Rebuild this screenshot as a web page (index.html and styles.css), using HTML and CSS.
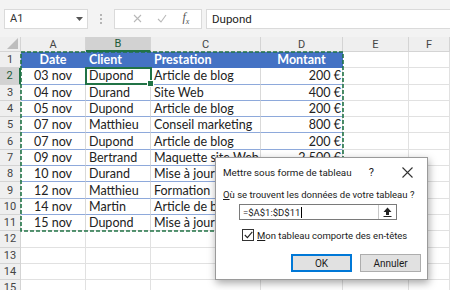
FILE: index.html
```html
<!DOCTYPE html>
<html lang="fr">

<head>
    <meta charset="UTF-8">
    <title>Mettre sous forme de tableau</title>
    <link rel="stylesheet" href="styles.css">
</head>

<body>
    <div class="topbar">
        <div class="namebox">
            <span>A1</span>
            <svg width="7" height="4" viewBox="0 0 7 4"><path d="M0 0h7L3.5 4z" fill="#555"/></svg>
        </div>
        <div class="dots"><i></i><i></i><i></i></div>
        <div class="fxbtns">
            <svg width="9" height="9" viewBox="0 0 9 9"><path d="M1 1l7 7M8 1L1 8" stroke="#b8b8b8" stroke-width="1.1"/></svg>
            <svg width="10" height="9" viewBox="0 0 10 9"><path d="M1 5l3 3 5-7" stroke="#b8b8b8" stroke-width="1.1" fill="none"/></svg>
            <span class="fx">f<sub>x</sub></span>
        </div>
        <div class="formula">Dupond</div>
    </div>

    <div class="sheet">
        <div class="corner"><svg width="11" height="11" viewBox="0 0 11 11"><path d="M11 0v11H0z" fill="#bdbdbd"/></svg></div>
        <div class="ch">A</div>
        <div class="ch sel">B</div>
        <div class="ch">C</div>
        <div class="ch">D</div>
        <div class="ch">E</div>
        <div class="ch">F</div>

        <div class="rh">1</div>
        <div class="c th ctr">Date</div>
        <div class="c th">Client</div>
        <div class="c th">Prestation</div>
        <div class="c th ctr">Montant</div>
        <div class="c"></div>
        <div class="c"></div>

        <div class="rh sel">2</div>
        <div class="c td ctr">03 nov</div>
        <div class="c td">Dupond</div>
        <div class="c td">Article de blog</div>
        <div class="c td r">200 €</div>
        <div class="c"></div>
        <div class="c"></div>

        <div class="rh">3</div>
        <div class="c td ctr">04 nov</div>
        <div class="c td">Durand</div>
        <div class="c td">Site Web</div>
        <div class="c td r">400 €</div>
        <div class="c"></div>
        <div class="c"></div>

        <div class="rh">4</div>
        <div class="c td ctr">05 nov</div>
        <div class="c td">Dupond</div>
        <div class="c td">Article de blog</div>
        <div class="c td r">200 €</div>
        <div class="c"></div>
        <div class="c"></div>

        <div class="rh">5</div>
        <div class="c td ctr">07 nov</div>
        <div class="c td">Matthieu</div>
        <div class="c td">Conseil marketing</div>
        <div class="c td r">800 €</div>
        <div class="c"></div>
        <div class="c"></div>

        <div class="rh">6</div>
        <div class="c td ctr">07 nov</div>
        <div class="c td">Dupond</div>
        <div class="c td">Article de blog</div>
        <div class="c td r">200 €</div>
        <div class="c"></div>
        <div class="c"></div>

        <div class="rh">7</div>
        <div class="c td ctr">09 nov</div>
        <div class="c td">Bertrand</div>
        <div class="c td">Maquette site Web</div>
        <div class="c td r">2 500 €</div>
        <div class="c"></div>
        <div class="c"></div>

        <div class="rh">8</div>
        <div class="c td ctr">10 nov</div>
        <div class="c td">Durand</div>
        <div class="c td">Mise à jour site</div>
        <div class="c td r">150 €</div>
        <div class="c"></div>
        <div class="c"></div>

        <div class="rh">9</div>
        <div class="c td ctr">12 nov</div>
        <div class="c td">Matthieu</div>
        <div class="c td">Formation</div>
        <div class="c td r">600 €</div>
        <div class="c"></div>
        <div class="c"></div>

        <div class="rh">10</div>
        <div class="c td ctr">14 nov</div>
        <div class="c td">Martin</div>
        <div class="c td">Article de blog</div>
        <div class="c td r">200 €</div>
        <div class="c"></div>
        <div class="c"></div>

        <div class="rh">11</div>
        <div class="c td last ctr">15 nov</div>
        <div class="c td last">Dupond</div>
        <div class="c td last">Mise à jour blog</div>
        <div class="c td last r">150 €</div>
        <div class="c"></div>
        <div class="c"></div>

        <div class="rh">12</div>
        <div class="c"></div><div class="c"></div><div class="c"></div><div class="c"></div><div class="c"></div><div class="c"></div>
        <div class="rh">13</div>
        <div class="c"></div><div class="c"></div><div class="c"></div><div class="c"></div><div class="c"></div><div class="c"></div>
        <div class="rh">14</div>
        <div class="c"></div><div class="c"></div><div class="c"></div><div class="c"></div><div class="c"></div><div class="c"></div>
        <div class="rh">15</div>
        <div class="c"></div><div class="c"></div><div class="c"></div><div class="c"></div><div class="c"></div><div class="c"></div>

        <!-- overlays -->
        <svg class="ants" width="324" height="181" viewBox="0 0 324 181">
            <rect x="1" y="1" width="322" height="179" fill="none" stroke="#217346" stroke-width="1.6" stroke-dasharray="4 2"/>
        </svg>
        <div class="cursor"><span class="handle"></span></div>
    </div>

    <div class="dialog">
        <div class="dlg-title">
            <span class="ttl">Mettre sous forme de tableau</span>
            <span class="help">?</span>
            <svg class="close" width="11" height="11" viewBox="0 0 11 11"><path d="M0.5 0.5l10 10M10.5 0.5l-10 10" stroke="#333" stroke-width="1.1"/></svg>
        </div>
        <div class="dlg-label"><u>O</u>ù se trouvent les données de votre tableau ?</div>
        <div class="dlg-input">
            <span class="ref">=$A$1:$D$11<i class="caret"></i></span>
            <span class="pick"><svg width="9" height="10" viewBox="0 0 9 10"><path d="M4.5 0.5L8.5 5H6v3H3V5H0.5z" fill="#222"/><path d="M0.5 9.5h8" stroke="#222"/></svg></span>
        </div>
        <div class="dlg-check">
            <span class="box"><svg width="9" height="8" viewBox="0 0 9 8"><path d="M0.8 4l2.6 2.6L8.3 0.8" stroke="#222" stroke-width="1.1" fill="none"/></svg></span>
            <span><u>M</u>on tableau comporte des en-têtes</span>
        </div>
        <div class="dlg-btns">
            <button class="btn ok">OK</button>
            <button class="btn">Annuler</button>
        </div>
    </div>
</body>

</html>
```

FILE: styles.css
```css
body {
    margin: 0;
    width: 450px;
    height: 290px;
    overflow: hidden;
    font-family: "Lato", "Open Sans", sans-serif;
    background-color: #fff;
    color: #222;
}

.topbar {
    height: 37px;
    display: flex;
    align-items: center;
    background-color: #f3f3f3;
    padding-left: 4px;
    box-sizing: border-box;
}

.namebox {
    width: 84px;
    height: 20px;
    box-sizing: border-box;
    background-color: #fff;
    border: 1px solid #dadada;
    display: flex;
    align-items: center;
    justify-content: space-between;
    padding: 0 4px 0 5px;
    font-family: "Roboto", sans-serif;
    font-size: 11px;
    color: #333;
}

.dots {
    width: 26px;
    display: flex;
    flex-direction: column;
    align-items: center;
    gap: 2px;
}

.dots i {
    width: 2px;
    height: 2px;
    background-color: #b5b5b5;
}

.fxbtns {
    width: 88px;
    height: 20px;
    box-sizing: border-box;
    background-color: #fff;
    border: 1px solid #dadada;
    display: flex;
    align-items: center;
    justify-content: space-around;
    padding: 0 4px 0 10px;
}

.fx {
    font-family: "Liberation Serif", serif;
    font-style: italic;
    font-size: 12px;
    color: #555;
}

.fx sub {
    font-size: 8px;
}

.formula {
    flex: 1;
    height: 20px;
    margin-left: 4px;
    box-sizing: border-box;
    background-color: #fff;
    border: 1px solid #dadada;
    border-right: none;
    display: flex;
    align-items: center;
    padding-left: 5px;
    font-family: "Roboto", sans-serif;
    font-size: 11.5px;
    color: #222;
}

.sheet {
    position: relative;
    display: grid;
    grid-template-columns: 21px 65px 65px 110px 82px 66px 41px;
    grid-template-rows: 15px repeat(15, 16.3px);
    font-size: 12.5px;
}

.corner,
.ch,
.rh {
    background-color: #efefef;
    color: #444;
    box-sizing: border-box;
    border-right: 1px solid #d4d4d4;
    border-bottom: 1px solid #d4d4d4;
    display: flex;
    align-items: center;
    justify-content: center;
    font-family: "Roboto", sans-serif;
    font-size: 11px;
}

.corner {
    justify-content: flex-end;
    align-items: flex-end;
    padding: 0 2px 2px 0;
}

.ch.sel {
    background-color: #d2d2d2;
    border-bottom: 2px solid #217346;
    color: #1d5a38;
}

.rh.sel {
    background-color: #d2d2d2;
    border-right: 2px solid #217346;
    color: #1d5a38;
}

.c {
    box-sizing: border-box;
    border-right: 1px solid #e1e1e1;
    border-bottom: 1px solid #e1e1e1;
    display: flex;
    align-items: center;
    padding: 0 3px;
    white-space: nowrap;
    overflow: visible;
}

.th {
    background-color: #4472c4;
    color: #fff;
    font-weight: 700;
    border-right-color: #4472c4;
    border-bottom-color: #4472c4;
}

.td {
    border-bottom-color: #8ea9db;
    border-right-color: #d9d9d9;
}

.td.last {
    border-bottom-color: #e1e1e1;
}

.ctr {
    justify-content: center;
}

.r {
    justify-content: flex-end;
    padding-right: 1px;
}

.ants {
    position: absolute;
    left: 20px;
    top: 14px;
}

.cursor {
    position: absolute;
    left: 85px;
    top: 30px;
    width: 67px;
    height: 18px;
    box-sizing: border-box;
    border: 2px solid #217346;
}

.handle {
    position: absolute;
    right: -4px;
    bottom: -4px;
    width: 5px;
    height: 5px;
    background-color: #217346;
    border: 1px solid #fff;
}

.dialog {
    position: absolute;
    left: 215px;
    top: 157px;
    width: 213px;
    height: 123px;
    box-sizing: border-box;
    background-color: #fff;
    border: 1px solid #9a9a9a;
    box-shadow: 1px 3px 8px rgba(0, 0, 0, 0.35);
    font-family: "Roboto", sans-serif;
    font-size: 9.5px;
    color: #1a1a1a;
    display: flex;
    flex-direction: column;
    white-space: nowrap;
}

.dlg-title {
    display: flex;
    align-items: center;
    height: 24px;
    padding: 2px 0 0 7px;
}

.ttl {
    flex-shrink: 0;
    font-size: 9.8px;
}

.help {
    margin-left: auto;
    font-size: 11px;
}

.close {
    flex-shrink: 0;
    margin: 0 14px 0 28px;
}

.dlg-label {
    margin-top: 5px;
    padding-left: 7px;
}

.dlg-input {
    margin: 4px 0 0 23px;
    width: 158px;
    height: 16px;
    box-sizing: border-box;
    border: 1px solid #7a7a7a;
    display: flex;
    align-items: center;
}

.ref {
    flex: 1;
    padding-left: 3px;
    display: flex;
    align-items: center;
}

.caret {
    width: 1px;
    height: 11px;
    background-color: #000;
    margin-left: 1px;
}

.pick {
    width: 17px;
    height: 14px;
    border-left: 1px solid #c8c8c8;
    display: flex;
    align-items: center;
    justify-content: center;
}

.dlg-check {
    margin: 9px 0 0 26px;
    display: flex;
    align-items: center;
    gap: 3px;
}

.box {
    width: 12px;
    height: 12px;
    box-sizing: border-box;
    border: 1px solid #333;
    display: flex;
    align-items: center;
    justify-content: center;
}

.dlg-btns {
    margin-top: auto;
    margin-bottom: 7px;
    display: flex;
    justify-content: flex-end;
    gap: 8px;
    padding-right: 6px;
}

.btn {
    width: 61px;
    height: 18px;
    box-sizing: border-box;
    border: 1px solid #adadad;
    background-color: #e1e1e1;
    font-family: "Roboto", sans-serif;
    font-size: 10px;
    color: #1a1a1a;
    padding: 0;
}

.btn.ok {
    border: 2px solid #0078d7;
}
```
